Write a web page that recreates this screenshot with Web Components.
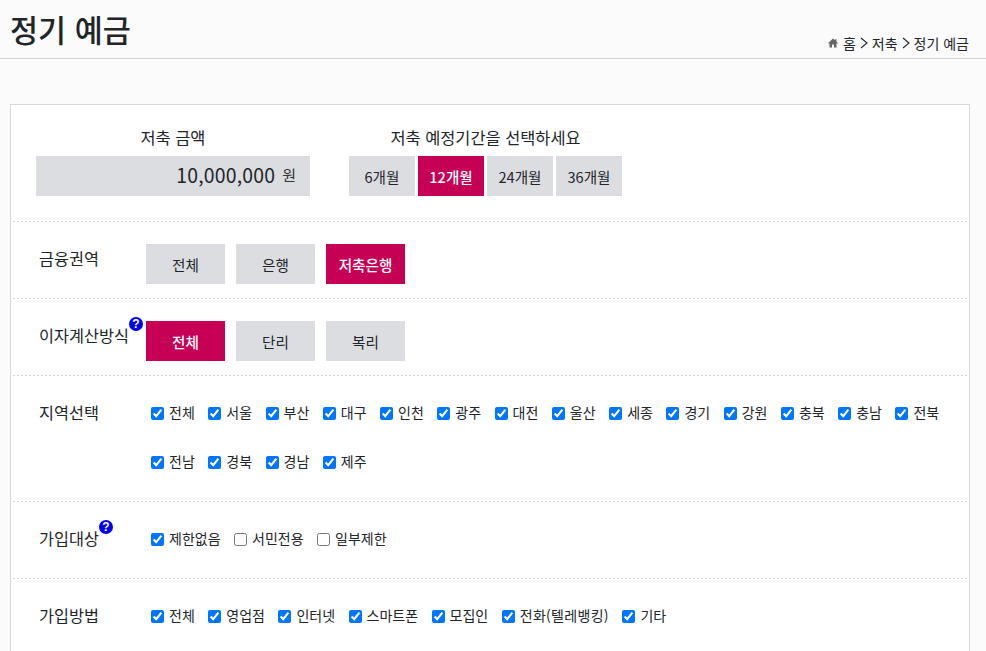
<!DOCTYPE html>
<html lang="ko">
<head>
<meta charset="utf-8">
<title>정기 예금</title>
<style>
html,body{margin:0;padding:0;background:#fbfbfb;}
body{font-family:"Noto Sans CJK KR","Noto Sans",sans-serif;color:#212529;overflow:hidden;}
</style>
</head>
<body>
<page-head title="정기 예금">
  <bread-crumb>
    <span>홈</span><span>저축</span><span>정기 예금</span>
  </bread-crumb>
</page-head>
<search-card>
  <top-section>
    <div slot="amount">10,000,000</div>
    <toggle-btn slot="period">6개월</toggle-btn>
    <toggle-btn slot="period" on>12개월</toggle-btn>
    <toggle-btn slot="period">24개월</toggle-btn>
    <toggle-btn slot="period">36개월</toggle-btn>
  </top-section>
  <filter-row label="금융권역">
    <toggle-btn wide>전체</toggle-btn>
    <toggle-btn wide>은행</toggle-btn>
    <toggle-btn wide on>저축은행</toggle-btn>
  </filter-row>
  <filter-row label="이자계산방식" help>
    <toggle-btn wide on>전체</toggle-btn>
    <toggle-btn wide>단리</toggle-btn>
    <toggle-btn wide>복리</toggle-btn>
  </filter-row>
  <filter-row label="지역선택" checks>
    <check-item checked>전체</check-item>
    <check-item checked>서울</check-item>
    <check-item checked>부산</check-item>
    <check-item checked>대구</check-item>
    <check-item checked>인천</check-item>
    <check-item checked>광주</check-item>
    <check-item checked>대전</check-item>
    <check-item checked>울산</check-item>
    <check-item checked>세종</check-item>
    <check-item checked>경기</check-item>
    <check-item checked>강원</check-item>
    <check-item checked>충북</check-item>
    <check-item checked>충남</check-item>
    <check-item checked>전북</check-item>
    <check-item checked>전남</check-item>
    <check-item checked>경북</check-item>
    <check-item checked>경남</check-item>
    <check-item checked>제주</check-item>
  </filter-row>
  <filter-row label="가입대상" help checks>
    <check-item checked>제한없음</check-item>
    <check-item>서민전용</check-item>
    <check-item>일부제한</check-item>
  </filter-row>
  <filter-row label="가입방법" checks>
    <check-item checked>전체</check-item>
    <check-item checked>영업점</check-item>
    <check-item checked>인터넷</check-item>
    <check-item checked>스마트폰</check-item>
    <check-item checked>모집인</check-item>
    <check-item checked style="letter-spacing:.3px">전화(텔레뱅킹)</check-item>
    <check-item checked>기타</check-item>
  </filter-row>
</search-card>
<script>
class pageHead extends HTMLElement{
    constructor(){
        super();
        this.attachShadow({mode:'open'})
        this.shadowRoot.innerHTML=`
        <style>
        :host{display:flex;justify-content:space-between;align-items:flex-end;height:58px;
            border-bottom:1px solid #d2d2d4;padding:0 17px 0 10px;}
        h1{margin:0 0 7px;font-size:30.5px;font-weight:500;line-height:44px;color:#212529;}
        </style>
        <h1></h1><slot></slot>`
        this.shadowRoot.querySelector('h1').textContent=this.getAttribute('title')
    }
}
customElements.define('page-head',pageHead);

class breadCrumb extends HTMLElement{
    constructor(){
        super();
        this.attachShadow({mode:'open'})
        this.shadowRoot.innerHTML=`
        <style>
        :host{display:flex;align-items:center;font-size:14px;line-height:20px;margin-bottom:5px;color:#212529;}
        svg{display:block}
        .home{margin-right:5px}
        .sep{margin:0 4px}
        </style>
        <svg class="home" width="10" height="10" viewBox="0 0 10 10"><path fill="#666" d="M5 .6 0 5.2l.5.6 1-.9V9.6h2.5V6.6h2v3h2.5V4.9l1 .9.5-.6-1.5-1.4V1.2H7.2v1.1z"/></svg>
        <span id="list"></span>`
        const list=this.shadowRoot.getElementById('list')
        list.style.cssText='display:flex;align-items:center'
        const items=[...this.querySelectorAll('span')].map(s=>s.textContent)
        items.forEach((t,i)=>{
            if(i>0){
                list.insertAdjacentHTML('beforeend','<svg class="sep" width="8" height="12" viewBox="0 0 8 12"><path d="M1 1l6 5-6 5" fill="none" stroke="#212529" stroke-width="1.1"/></svg>')
            }
            const s=document.createElement('span')
            s.textContent=t
            list.appendChild(s)
        })
    }
}
customElements.define('bread-crumb',breadCrumb);

class searchCard extends HTMLElement{
    constructor(){
        super();
        this.attachShadow({mode:'open'})
        this.shadowRoot.innerHTML=`
        <style>
        :host{display:block;margin:45px 16px 0 10px;background:#fff;border:1px solid #d8d8d8;padding:0 2px 40px;}
        </style>
        <slot></slot>`
    }
}
customElements.define('search-card',searchCard);

class topSection extends HTMLElement{
    constructor(){
        super();
        this.attachShadow({mode:'open'})
        this.shadowRoot.innerHTML=`
        <style>
        :host{display:flex;height:117px;padding:0 0 0 23px;gap:39px;box-sizing:border-box;
            background:repeating-linear-gradient(90deg,#d4d4d4 0 2px,transparent 2px 4px) left bottom/100% 1px no-repeat;}
        .col{display:flex;flex-direction:column;align-items:center}
        .cap{font-size:16.4px;line-height:22px;margin-top:21px;margin-bottom:8px;}
        .amount{width:274px;height:40px;background:#dcdde1;box-sizing:border-box;padding:0 14px 2px 0;
            display:flex;justify-content:flex-end;align-items:center;line-height:36px;}
        .num{font-size:19.4px;letter-spacing:.2px}
        .won{font-size:15px;margin-left:7px;color:#333}
        .btns{display:flex;gap:3px}
        ::slotted([slot=amount]){display:inline}
        </style>
        <div class="col">
            <div class="cap">저축 금액</div>
            <div class="amount"><span class="num"><slot name="amount"></slot></span><span class="won">원</span></div>
        </div>
        <div class="col">
            <div class="cap">저축 예정기간을 선택하세요</div>
            <div class="btns"><slot name="period"></slot></div>
        </div>`
    }
}
customElements.define('top-section',topSection);

class toggleBtn extends HTMLElement{
    constructor(){
        super();
        this.attachShadow({mode:'open'})
        this.shadowRoot.innerHTML=`
        <style>
        :host{display:flex;align-items:center;justify-content:center;width:66px;height:40px;
            background:#dcdde1;color:#212529;font-size:14.6px;font-weight:400;}
        :host([wide]){width:79px}
        :host([on]){background:#c60055;color:#fff;font-weight:500}
        </style>
        <slot></slot>`
    }
}
customElements.define('toggle-btn',toggleBtn);

class filterRow extends HTMLElement{
    constructor(){
        super();
        this.attachShadow({mode:'open'})
        this.shadowRoot.innerHTML=`
        <style>
        :host{display:flex;box-sizing:border-box;padding:22px 0 15px 26px;
            background:repeating-linear-gradient(90deg,#d4d4d4 0 2px,transparent 2px 4px) left bottom/100% 1px no-repeat;}
        .label{width:107px;flex:none;font-size:16.3px;line-height:28px;}
        .label span{position:relative;display:inline-block}
        .help{position:absolute;top:-4px;right:-14px;width:14px;height:14px;border-radius:50%;background:#0000f0;
            color:#fff;font-size:12px;font-weight:700;font-style:normal;line-height:14px;text-align:center;font-family:"Liberation Sans",sans-serif;}
        .body{display:flex;flex-wrap:wrap;gap:0 11px;}
        :host([checks]) .body{gap:0;margin-left:5px;flex:1}
        :host([checks]){padding:13px 0 15px 26px}
        :host([checks]) .label{line-height:47px}
        :host([checks]) .help{top:5px}
        </style>
        <div class="label"><span></span></div>
        <div class="body"><slot></slot></div>`
        const sp=this.shadowRoot.querySelector('.label span')
        sp.textContent=this.getAttribute('label')
        if(this.hasAttribute('help')){
            sp.insertAdjacentHTML('beforeend','<i class="help">?</i>')
        }
    }
}
customElements.define('filter-row',filterRow);

class checkItem extends HTMLElement{
    constructor(){
        super();
        this.attachShadow({mode:'open'})
        this.shadowRoot.innerHTML=`
        <style>
        :host{display:inline-flex;align-items:center;height:49px;margin-right:13.5px;font-size:14px;color:#212529;}
        input{width:13px;height:13px;margin:0 5px 0 0;accent-color:#0075ff}
        .txt{margin-bottom:3px}
        </style>
        <input type="checkbox"><span class="txt"><slot></slot></span>`
        this.shadowRoot.querySelector('input').checked=this.hasAttribute('checked')
    }
}
customElements.define('check-item',checkItem);
</script>
</body>
</html>
